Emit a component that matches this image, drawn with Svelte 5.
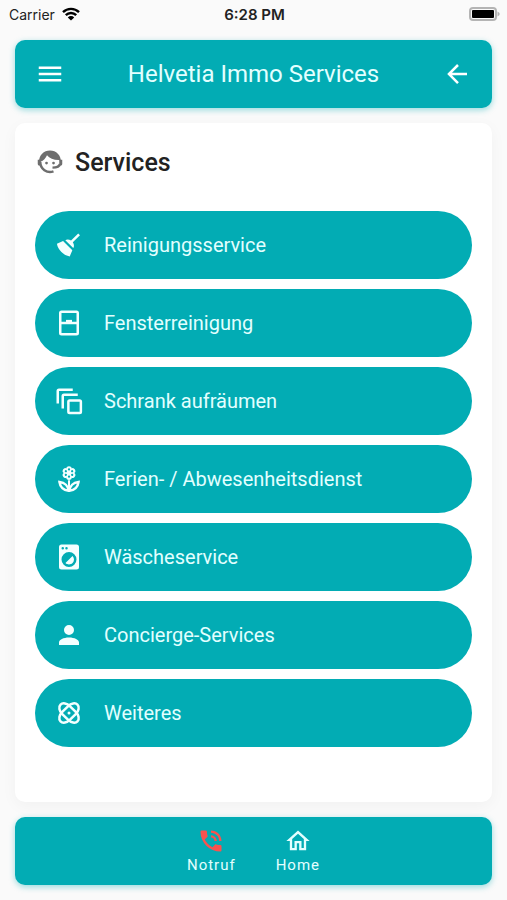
<script>
  const services = [
    { icon: 'broom', label: 'Reinigungsservice' },
    { icon: 'window', label: 'Fensterreinigung' },
    { icon: 'stack', label: 'Schrank aufräumen' },
    { icon: 'flower', label: 'Ferien- / Abwesenheitsdienst' },
    { icon: 'washer', label: 'Wäscheservice' },
    { icon: 'person', label: 'Concierge-Services' },
    { icon: 'atom', label: 'Weiteres' },
  ]

  const petals = [0, 60, 120, 180, 240, 300]

  const paths = {
    menu: 'M3,6H21V8H3V6M3,11H21V13H3V11M3,16H21V18H3V16Z',
    back: 'M20,11V13H8L13.5,18.5L12.08,19.92L4.16,12L12.08,4.08L13.5,5.5L8,11H20Z',
    broom: 'M19.36,2.72L20.78,4.14L15.06,9.85C16.13,11.39 16.28,13.24 15.38,14.44L9.06,8.12C10.26,7.22 12.11,7.37 13.65,8.44L19.36,2.72M5.93,17.57C3.92,15.56 2.69,13.16 2.35,10.92L7.23,8.83L14.67,16.27L12.58,21.15C10.34,20.81 7.94,19.58 5.93,17.57Z',
    washer: 'M14.83,11.17C16.39,12.73 16.39,15.27 14.83,16.83C13.27,18.39 10.73,18.39 9.17,16.83L14.83,11.17M6,2H18A2,2 0 0,1 20,4V20A2,2 0 0,1 18,22H6A2,2 0 0,1 4,20V4A2,2 0 0,1 6,2M7,4A1,1 0 0,0 6,5A1,1 0 0,0 7,6A1,1 0 0,0 8,5A1,1 0 0,0 7,4M10,4A1,1 0 0,0 9,5A1,1 0 0,0 10,6A1,1 0 0,0 11,5A1,1 0 0,0 10,4M12,8A6,6 0 0,0 6,14A6,6 0 0,0 12,20A6,6 0 0,0 18,14A6,6 0 0,0 12,8Z',
    person: 'M12,4A4,4 0 0,1 16,8A4,4 0 0,1 12,12A4,4 0 0,1 8,8A4,4 0 0,1 12,4M12,14C16.42,14 20,15.79 20,18V20H4V18C4,15.79 7.58,14 12,14Z',
    phone: 'M15,12H17A5,5 0 0,0 12,7V9A3,3 0 0,1 15,12M19,12H21C21,7 16.97,3 12,3V5C15.86,5 19,8.13 19,12M20,15.5C18.75,15.5 17.55,15.3 16.43,14.93C16.08,14.82 15.69,14.9 15.41,15.18L13.21,17.38C10.38,15.94 8.06,13.62 6.62,10.79L8.82,8.59C9.1,8.31 9.18,7.92 9.07,7.57C8.7,6.45 8.5,5.25 8.5,4A1,1 0 0,0 7.5,3H4A1,1 0 0,0 3,4A17,17 0 0,0 20,21A1,1 0 0,0 21,20V16.5A1,1 0 0,0 20,15.5Z',
    home: 'M12,5.69L17,10.19V18H15V12H9V18H7V10.19L12,5.69M12,3L2,12H5V20H11V14H13V20H19V12H22L12,3Z',
  }
</script>

{#snippet icon(name)}
  <svg class="icon" viewBox="0 0 24 24" aria-hidden="true">
    {#if name === 'window'}
      <g class="line">
        <rect x="5" y="3" width="14" height="18" rx="1" />
        <path d="M5,12H19" />
      </g>
      <path d="M9.6,9.5H14.4V12H9.6Z" />
    {:else if name === 'stack'}
      <g class="line">
        <path d="M3,14V4A1,1 0 0,1 4,3H15" />
        <path d="M7,18V8A1,1 0 0,1 8,7H19" />
        <rect x="11.5" y="11.5" width="10" height="10" rx="1" />
      </g>
    {:else if name === 'flower'}
      <circle cx="12" cy="7.2" r="3.4" />
      {#each petals as angle}
        <circle cx="12" cy="3.9" r="2.2" transform="rotate({angle} 12 7.2)" />
      {/each}
      {#each petals as angle}
        <circle class="hole" cx="12" cy="4.3" r="0.9" transform="rotate({angle} 12 7.2)" />
      {/each}
      <path d="M11.2,13H12.8V20H11.2Z" />
      <g class="line">
        <path d="M11.6,21.4C11.4,17.6 8.6,14.9 4.4,14.4C4.9,18.4 7.6,21.2 11.6,21.4Z" />
        <path d="M12.4,21.4C12.6,17.6 15.4,14.9 19.6,14.4C19.1,18.4 16.4,21.2 12.4,21.4Z" />
      </g>
    {:else if name === 'atom'}
      <g class="line">
        <rect x="2.4" y="7.6" width="19.2" height="8.8" rx="6.4" ry="4.4" transform="rotate(45 12 12)" />
        <rect x="2.4" y="7.6" width="19.2" height="8.8" rx="6.4" ry="4.4" transform="rotate(-45 12 12)" />
      </g>
      <circle cx="12" cy="12" r="1.2" />
    {:else if name === 'agent'}
      <path d="M3.2,12C3.2,6.5 7,2.8 12,2.8C17,2.8 20.8,6.5 20.8,12L19.6,10.4C15.4,10.6 11.6,9.3 9.6,6.6C8.6,9 6.8,10.8 4.4,11.8Z" />
      <path d="M2.2,10.2H4.6V14.8H3.4Q2.2,14.8 2.2,13.6ZM21.8,10.2H19.4V14.8H20.6Q21.8,14.8 21.8,13.6Z" />
      <path class="line" d="M4.2,12A7.9,7.9 0 0,0 14.8,19.5M20,13.6Q19.4,16.4 14,16.5" />
      <circle cx="9.2" cy="12.8" r="1.1" />
      <circle cx="14.8" cy="12.8" r="1.1" />
    {:else}
      <path d={paths[name]} />
    {/if}
  </svg>
{/snippet}

<div class="screen">
  <div class="status">
    <span class="carrier">
      Carrier
      <svg class="wifi" viewBox="0 0 18 14" aria-hidden="true">
        <path d="M1,5.2A11.4,11.4 0 0,1 17,5.2M3.8,8.2A7.3,7.3 0 0,1 14.2,8.2" />
        <path class="dot" d="M9,13.6L5.8,10.4A4.5,4.5 0 0,1 12.2,10.4Z" />
      </svg>
    </span>
    <time>6:28 PM</time>
    <svg class="battery" viewBox="0 0 31 14" aria-hidden="true">
      <rect class="shell" x="1" y="1" width="26" height="12" rx="3" />
      <rect x="3" y="3" width="22" height="8" rx="1" />
      <path class="tip" d="M28.5,4.5Q33,7 28.5,9.5Z" />
    </svg>
  </div>

  <header class="bar">
    <button class="plain" aria-label="Menü">{@render icon('menu')}</button>
    <h1>Helvetia Immo Services</h1>
    <button class="plain" aria-label="Zurück">{@render icon('back')}</button>
  </header>

  <main>
    <h2>
      {@render icon('agent')}
      Services
    </h2>
    <div class="services">
      {#each services as service}
        <button class="service">
          {@render icon(service.icon)}
          {service.label}
        </button>
      {/each}
    </div>
  </main>

  <nav class="bar">
    <a href="#notruf" class="emergency">{@render icon('phone')}<span>Notruf</span></a>
    <a href="#home">{@render icon('home')}<span>Home</span></a>
  </nav>
</div>

<style>
  :global(body) {
    background: #fafafa;
  }

  .screen {
    --teal: #02acb4;
    --ice: #e2ffff;
    box-sizing: border-box;
    min-height: 100vh;
    padding: 0 15px 14px;
    color: #222;
    font-family: Roboto, sans-serif;
  }

  button {
    border: 0;
    font: inherit;
    color: inherit;
    cursor: pointer;
  }

  .icon {
    flex: none;
    width: 30px;
    height: 30px;
    fill: currentColor;
  }

  .line {
    fill: none;
    stroke: currentColor;
    stroke-width: 2;
  }

  .hole {
    fill: var(--teal);
  }

  .status {
    display: grid;
    grid-template-columns: 1fr auto 1fr;
    align-items: center;
    height: 28px;
    margin: 0 -8px 12px -6px;
    font-family: Inter, sans-serif;
    font-size: 14px;
  }

  .carrier {
    display: flex;
    align-items: center;
    gap: 7px;
  }

  .wifi {
    width: 18px;
    height: 14px;
    fill: none;
    stroke: #000;
    stroke-width: 2.4;
  }

  .wifi .dot {
    fill: #000;
    stroke: none;
  }

  time {
    font-size: 15px;
    font-weight: 600;
  }

  .battery {
    justify-self: end;
    width: 31px;
    height: 14px;
  }

  .battery .shell {
    fill: none;
    stroke: #b4b4b4;
    stroke-width: 2;
  }

  .battery .tip {
    fill: #b4b4b4;
  }

  .bar {
    display: flex;
    align-items: center;
    height: 68px;
    border-radius: 10px;
    background: var(--teal);
    color: var(--ice);
    box-shadow: 0 2px 6px rgba(2, 172, 180, 0.4);
  }

  header {
    justify-content: space-between;
    padding: 0 20px;
  }

  .plain {
    display: flex;
    padding: 0;
    background: none;
  }

  .plain .icon {
    color: #fff;
  }

  h1 {
    margin: 0;
    font-size: 24px;
    font-weight: 400;
  }

  main {
    margin: 15px 0;
    padding: 20px 20px 54px;
    border-radius: 10px;
    background: #fff;
    box-shadow: 0 4px 16px rgba(0, 0, 0, 0.04);
  }

  h2 {
    display: flex;
    align-items: center;
    gap: 10px;
    height: 38px;
    margin: 0 0 30px;
    font-size: 25px;
    font-weight: 500;
  }

  h2 .icon {
    color: #6e6e6e;
  }

  .services {
    display: grid;
    gap: 10px;
    padding-bottom: 1px;
  }

  .service {
    display: flex;
    align-items: center;
    gap: 20px;
    height: 68px;
    padding: 0 19px;
    border-radius: 34px;
    background: var(--teal);
    color: var(--ice);
    font-size: 20px;
    text-align: left;
  }

  .service .icon {
    color: #f4ffff;
  }

  nav {
    justify-content: center;
    gap: 40px;
  }

  nav a {
    display: flex;
    flex-direction: column;
    align-items: center;
    color: inherit;
    font-size: 15px;
    line-height: 20px;
    letter-spacing: 1px;
    text-decoration: none;
  }

  nav .icon {
    width: 28px;
    height: 28px;
  }

  .emergency .icon {
    color: #f9524f;
  }
</style>
